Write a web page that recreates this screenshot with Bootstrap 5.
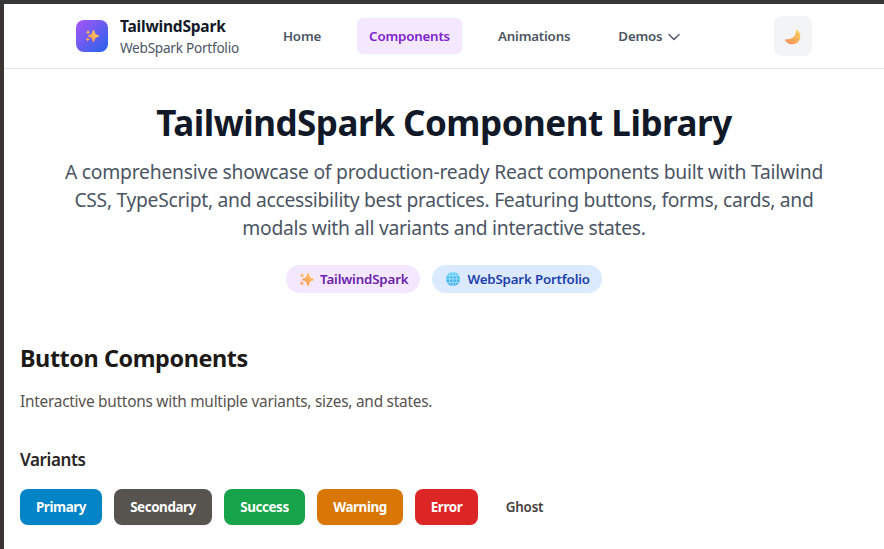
<!DOCTYPE html>
<html lang="en">
<head>
<meta charset="utf-8">
<meta name="viewport" content="width=device-width, initial-scale=1">
<title>TailwindSpark Component Library</title>
<link href="https://cdn.jsdelivr.net/npm/bootstrap@5.3.0/dist/css/bootstrap.min.css" rel="stylesheet">
<style>
body{font-family:"Segoe UI","Noto Sans","Open Sans",sans-serif;height:549px;overflow:hidden;background:#fff;border-top:4px solid #383737;border-left:4px solid #383533;color:#1c1917}
.site-nav{height:65px;border-bottom:1px solid #e5e7eb;padding:0 72px}
.logo{width:32px;height:32px;border-radius:8px;background:linear-gradient(135deg,#a855f7,#2563eb)}
.brand-text{margin-left:12px;width:119px;white-space:nowrap}
.brand-name{font-size:15.5px;font-weight:700;line-height:22px;letter-spacing:-.2px;color:#111827}
.brand-sub{font-size:13.6px;line-height:20px;letter-spacing:-.25px;color:#4b5563;position:relative;top:1px}
.site-links{margin-left:32px;gap:24px}
.site-link{font-size:13.3px;font-weight:600;line-height:20px;color:#4b5563;border-radius:6px;padding:8px 12px;letter-spacing:-.18px;white-space:nowrap;text-decoration:none}
.site-link.current{background:#f3e8ff;color:#7e22ce}
.site-link svg{margin-left:2px}
.theme{width:38px;height:40px;border-radius:8px;background:#f3f4f6;border:0;padding:2px 0 0}
.hero{padding-top:31px;height:224px}
.hero h1{font-size:35px;font-weight:700;line-height:45px;letter-spacing:-.48px;color:#111827;white-space:nowrap;margin-bottom:13px}
.hero p{font-size:19.3px;line-height:28px;letter-spacing:-.3px;color:#4b5563;white-space:nowrap;margin-bottom:23px}
.hero p span:first-child{letter-spacing:-.22px}
.tag{height:28px;font-size:13.3px;font-weight:600;line-height:28px;letter-spacing:-.16px;padding:0 12px 0 13px;white-space:nowrap}
.tag svg{margin-right:6px}
.tag-purple{background:#f3e8ff;color:#6b21a8}
.tag-blue{background:#dbeafe;color:#1e40af}
.library{padding:49px 16px 0}
h2{font-size:23.4px;font-weight:700;line-height:32px;letter-spacing:-.43px;margin-bottom:16px}
.note{font-size:15.4px;line-height:24px;letter-spacing:-.25px;color:#57534e;margin-bottom:32px}
h3{font-size:17px;font-weight:600;line-height:28px;letter-spacing:-.4px;color:#292524;margin-bottom:15px}
.variants{gap:12px}
.demo{height:36px;font-size:13.4px;font-weight:700;letter-spacing:-.42px;line-height:36px;border:0;border-radius:8px;padding:0;color:#fff;box-shadow:0 1px 2px rgba(0,0,0,.06)}
.v-primary{background:#0284c7;width:82px}.v-secondary{background:#57534e;width:98px}.v-success{background:#16a34a;width:81px}.v-warning{background:#d97706;width:86px}.v-error{background:#dc2626;width:63px}
.v-ghost{color:#44403c;font-weight:600;box-shadow:none;background:none;width:69px;letter-spacing:-.2px}
</style>
</head>
<body>
<svg width="0" height="0" class="position-absolute">
<defs>
<linearGradient id="gold" x1="1" y1="0" x2="0" y2="1"><stop stop-color="#ffd65c"/><stop offset="1" stop-color="#f58a5c"/></linearGradient>
<linearGradient id="sea" x1="0" y1="0" x2="0" y2="1"><stop stop-color="#5bd0f7"/><stop offset="1" stop-color="#3da3e8"/></linearGradient>
<symbol id="sparkles" viewBox="0 0 14 14"><path fill="url(#gold)" d="M8.5 1C9 1 9.2 1.3 9.4 2C9.9 4.6 10.5 5.3 12.9 6C13.7 6.2 14 6.5 14 7S13.7 7.8 12.9 8C10.5 8.7 9.9 9.4 9.4 12C9.2 12.8 9 13 8.5 13S7.8 12.8 7.6 12C7.1 9.4 6.5 8.7 4.1 8C3.3 7.8 3 7.5 3 7S3.3 6.2 4.1 6C6.5 5.3 7.1 4.6 7.6 2C7.8 1.3 8 1 8.5 1Z"/><path fill="url(#gold)" d="M3 .8L3.7 2.5L5.4 3.2L3.7 3.9L3 5.6L2.3 3.9L.6 3.2L2.3 2.5ZM2.7 8L3.4 9.7L5.2 10.4L3.4 11.1L2.7 12.8L2 11.1L.2 10.4L2 9.7Z"/></symbol>
</defs></svg>
<nav class="site-nav d-flex align-items-center">
  <div class="logo d-flex align-items-center justify-content-center"><svg width="14" height="14"><use href="#sparkles"/></svg></div>
  <div class="brand-text"><div class="brand-name">TailwindSpark</div><div class="brand-sub">WebSpark Portfolio</div></div>
  <div class="site-links d-flex">
    <a class="site-link" href="#">Home</a>
    <a class="site-link current" href="#">Components</a>
    <a class="site-link" href="#">Animations</a>
    <a class="site-link" href="#">Demos <svg width="12" height="8" viewBox="0 0 12 8" fill="none" stroke="#4b5563" stroke-width="1.4" stroke-linecap="round" stroke-linejoin="round"><path d="M1 1.5L6 6.5L11 1.5"/></svg></a>
  </div>
  <button class="theme ms-auto d-flex align-items-center justify-content-center" aria-label="Theme"><svg width="16" height="16" viewBox="0 0 16 16"><path fill="url(#gold)" d="M11.1 1.1C11.2.6 11.8.7 12 1.1C13.4 2.2 15.5 3.8 15.3 7.4C15.2 12 11.7 15.3 7.3 15.3C4.3 15.3 1.4 13.8.2 11.4C-.1 10.7.3 10.2 1 10.3C7.5 10.8 11.1 6.9 11.1 1.1Z"/><g fill="#e99a50"><circle cx="12.6" cy="5.3" r=".7"/><circle cx="9.3" cy="11.3" r=".8"/><circle cx="5.7" cy="13" r=".7"/><circle cx="12.5" cy="9.7" r=".6"/></g></svg></button>
</nav>
<header class="hero text-center">
  <h1>TailwindSpark Component Library</h1>
  <p><span>A comprehensive showcase of production-ready React components built with Tailwind</span><br><span>CSS, TypeScript, and accessibility best practices. Featuring buttons, forms, cards, and</span><br><span>modals with all variants and interactive states.</span></p>
  <div class="d-flex justify-content-center" style="gap:12px">
    <span class="tag tag-purple rounded-pill d-flex align-items-center"><svg width="15" height="15"><use href="#sparkles"/></svg>TailwindSpark</span>
    <span class="tag tag-blue rounded-pill d-flex align-items-center"><svg width="16" height="16" viewBox="0 0 16 16" fill="none" stroke="#a9e5ff" stroke-width=".8"><circle cx="8" cy="8" r="7" fill="url(#sea)" stroke="none"/><path d="M8 1V15M1 8H15M2 4.5H14M2 11.5H14"/><ellipse cx="8" cy="8" rx="3.6" ry="7"/></svg>WebSpark Portfolio</span>
  </div>
</header>
<main class="library">
  <h2>Button Components</h2>
  <p class="note">Interactive buttons with multiple variants, sizes, and states.</p>
  <h3>Variants</h3>
  <div class="variants d-flex">
    <button class="demo v-primary">Primary</button>
    <button class="demo v-secondary">Secondary</button>
    <button class="demo v-success">Success</button>
    <button class="demo v-warning">Warning</button>
    <button class="demo v-error">Error</button>
    <button class="demo v-ghost">Ghost</button>
  </div>
</main>
<script src="https://cdn.jsdelivr.net/npm/bootstrap@5.3.0/dist/js/bootstrap.bundle.min.js"></script>
</body>
</html>
